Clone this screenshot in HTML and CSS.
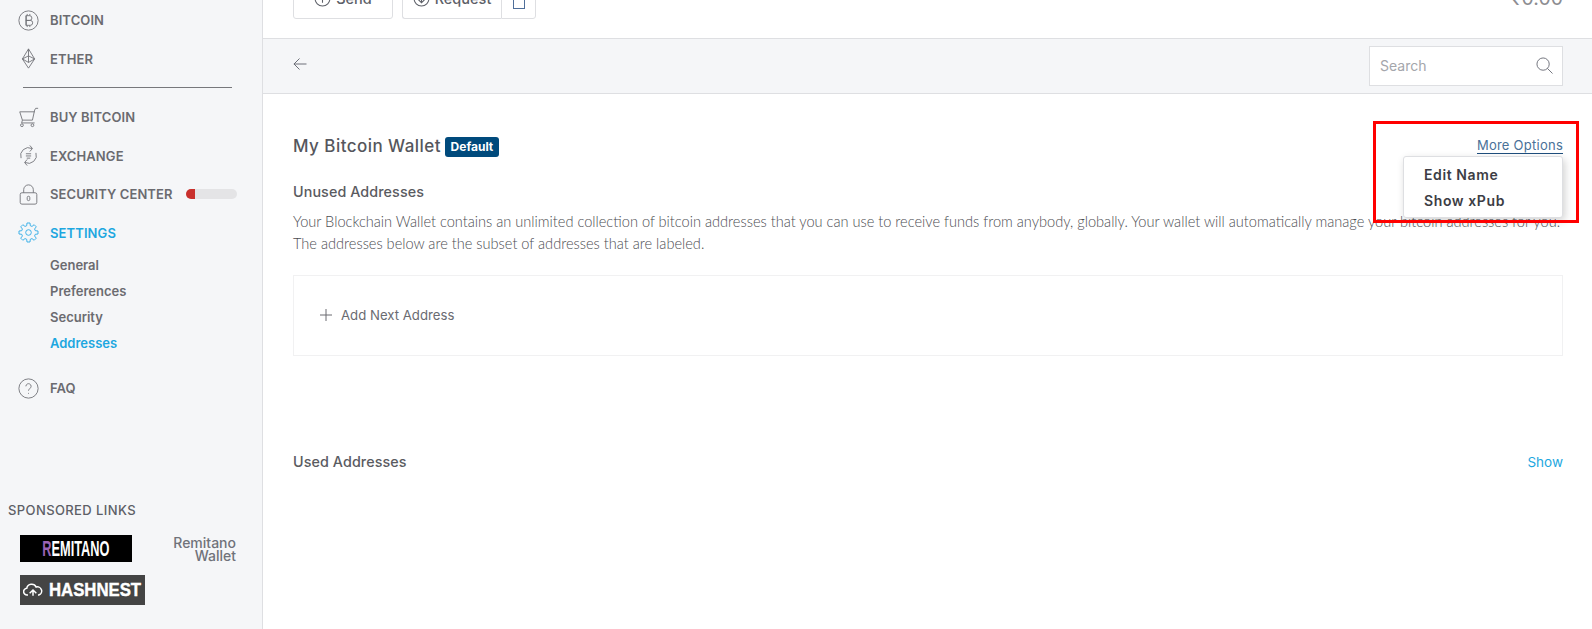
FILE: index.html
```html
<!DOCTYPE html>
<html lang="en">
<head>
<meta charset="utf-8">
<title>Addresses</title>
<link rel="stylesheet" href="styles.css">
</head>
<body>
<div class="app">
  <aside class="sidebar">
    <nav class="nav">
      <a class="nav-row">
        <svg class="ico" viewBox="0 0 24 24"><circle cx="12" cy="12" r="11"/><path d="M9 6.500h4.200a2.700 2.700 0 0 1 0 5.400H9h5a2.800 2.800 0 0 1 0 5.600H9ZM9.500 6.500v11M10.500 4.500v2M13.500 4.500v2M10.500 17.500v2M13.500 17.500v2"/></svg>
        <span>BITCOIN</span>
      </a>
      <a class="nav-row">
        <svg class="ico" viewBox="0 0 24 24"><path d="M12 1 5 12.500 12 23l7-10.500ZM12 1v15.500M5 12.500l7 4 7-4M12 9l-7 3.500M12 9l7 3.500"/></svg>
        <span>ETHER</span>
      </a>
      <div class="divider"></div>
      <a class="nav-row">
        <svg class="ico" viewBox="0 0 24 24"><path d="M23 1.500h-2.800l-1.200 2L16.500 15H5L2 5.500h17M5 15l-.8 3.200h14.800"/><circle cx="4.500" cy="20.800" r="1.600"/><circle cx="16.500" cy="20.800" r="1.600"/></svg>
        <span>BUY BITCOIN</span>
      </a>
      <a class="nav-row">
        <svg class="ico" viewBox="0 0 24 24"><path d="M3.500 15a9 9 0 0 1 12.500-11M20.500 9a9 9 0 0 1-12.500 11M13.500 .5l3 3.500-3 3.500M10.500 16.500l-3 3.500 3 3.500M9 10h6M9 12.500h6M10 15h4"/></svg>
        <span>EXCHANGE</span>
      </a>
      <a class="nav-row">
        <svg class="ico" viewBox="0 0 24 24"><rect x="2.500" y="10" width="19" height="13" rx="2"/><path d="M6.500 10V6.500a5.500 5.500 0 0 1 11 0V10"/><rect x="10.500" y="14" width="3" height="5" rx="1.500"/></svg>
        <span>SECURITY CENTER</span>
        <span class="meter"><span class="meter-fill"></span></span>
      </a>
      <a class="nav-row is-active">
        <svg class="ico" viewBox="0 0 24 24"><circle cx="12" cy="12" r="3.200"/><path d="M9.930 4.270 10.280 1.140H13.720L14.070 4.270 16 5.070 18.470 3.100 20.900 5.530 18.930 8 19.730 9.930 22.860 10.280V13.720L19.730 14.070 18.930 16 20.900 18.470 18.470 20.900 16 18.930 14.070 19.730 13.720 22.860H10.280L9.930 19.730 8 18.930 5.530 20.900 3.100 18.470 5.070 16 4.270 14.070 1.140 13.720V10.280L4.270 9.930 5.070 8 3.100 5.530 5.530 3.100 8 5.070Z"/></svg>
        <span>SETTINGS</span>
      </a>
      <div class="subnav">
        <a class="sub-row">General</a>
        <a class="sub-row">Preferences</a>
        <a class="sub-row">Security</a>
        <a class="sub-row is-active">Addresses</a>
      </div>
      <a class="nav-row faq">
        <svg class="ico" viewBox="0 0 24 24"><circle cx="12" cy="12" r="11"/><path d="M9 9.500a3 3 0 1 1 4.500 2.600c-1 .6-1.500 1.200-1.500 2.400M12 17v1"/></svg>
        <span>FAQ</span>
      </a>
    </nav>
    <div class="sponsored">
      <div class="sponsored-title">SPONSORED LINKS</div>
      <div class="sponsor-row">
        <a class="logo logo-remitano"><span class="logo-text-narrow"><b class="logo-r">R</b>EMITANO</span></a>
        <span class="sponsor-name">Remitano Wallet</span>
      </div>
      <a class="logo logo-hashnest">
        <svg class="cloud" viewBox="0 0 24 16"><path d="M6 14H5a4 4 0 0 1-.5-8 6 6 0 0 1 11.300-1.500A5 5 0 0 1 19 14h-1M8 12l4-4 4 4M12 8v7"/></svg>
        <span class="logo-text-wide">HASHNEST</span>
      </a>
    </div>
  </aside>

  <main class="main">
    <div class="topbar">
      <div class="actions">
        <button class="btn btn-send">
          <svg class="btn-ico" viewBox="0 0 16 16"><circle cx="8" cy="8" r="7"/><path d="M8 12V4M5 7l3-3 3 3"/></svg>
          <span>Send</span>
        </button>
        <div class="btn-group">
          <button class="btn btn-request">
            <svg class="btn-ico" viewBox="0 0 16 16"><circle cx="8" cy="8" r="7"/><path d="M8 4v8M5 9l3 3 3-3"/></svg>
            <span>Request</span>
          </button>
          <button class="btn btn-square"><span class="square"></span></button>
        </div>
      </div>
      <div class="balance">₹0.00</div>
    </div>

    <div class="band">
      <svg class="back" viewBox="0 0 14 14"><path d="M13.500 7H.8M6.500 1.500 1 7l5.500 5.500"/></svg>
      <div class="search">
        <span>Search</span>
        <svg class="search-ico" viewBox="0 0 18 18"><circle cx="7.500" cy="7.500" r="6.500"/><path d="m12 12 5.500 5.500"/></svg>
      </div>
    </div>

    <section class="content">
      <div class="title-row">
        <h1 class="title">My Bitcoin Wallet</h1>
        <span class="badge">Default</span>
        <a class="more">More Options</a>
      </div>
      <h2 class="sub-title">Unused Addresses</h2>
      <p class="copy">Your Blockchain Wallet contains an unlimited collection of bitcoin addresses that you can use to receive funds from anybody, globally. Your wallet will automatically manage your bitcoin addresses for you.<br>The addresses below are the subset of addresses that are labeled.</p>
      <div class="add-box">
        <svg class="plus" viewBox="0 0 12 12"><path d="M6 0v12M0 6h12"/></svg>
        <span>Add Next Address</span>
      </div>
      <div class="used-row">
        <h2 class="sub-title used-title">Used Addresses</h2>
        <a class="show">Show</a>
      </div>
    </section>

    <div class="menu">
      <a class="menu-item">Edit Name</a>
      <a class="menu-item">Show xPub</a>
    </div>
    <div class="highlight"></div>
  </main>
</div>
</body>
</html>
```

FILE: styles.css
```css
* { box-sizing: border-box; }
html, body { margin: 0; height: 629px; overflow: hidden; background: #fff; }
body { font-family: Inter, "Noto Sans", sans-serif; color: #5a5a5a; }
h1, h2, p { margin: 0; }
button { font: inherit; color: inherit; background: #fff; }

.app { display: flex; height: 629px; }

/* Sidebar */
.sidebar {
  width: 263px; flex: none; display: flex; flex-direction: column;
  background: #f5f6f8; border-right: 1px solid #dedfe2;
  padding-top: 1px;
}
.nav { display: flex; flex-direction: column; }
.nav-row {
  display: flex; align-items: center; height: 38.500px; padding-left: 18px;
  font-size: 13px; font-weight: 600; color: #6b6b70; letter-spacing: .1px;
}
.ico {
  width: 21px; height: 21px; flex: none; margin-right: 11px;
  fill: none; stroke: #6f7076; stroke-width: 1;
}
.is-active { color: #1da7e0; }
.is-active .ico { stroke: #2aa9e6; }
.divider { height: 1px; margin: 9px 30px 10px 23px; background: #77787c; }
.meter {
  width: 51px; height: 10px; margin-left: 13px; border-radius: 5px;
  background: #e4e4e6; overflow: hidden; display: block;
}
.meter-fill { display: block; width: 9px; height: 10px; background: #c9302c; }
.subnav { display: flex; flex-direction: column; }
.sub-row {
  display: flex; align-items: center; height: 26px; padding-left: 50px;
  font-size: 13px; font-weight: 600; color: #6b6b70;
}
.sub-row.is-active { color: #1da7e0; }
.faq { margin-top: 13px; }

.sponsored { margin-top: auto; padding: 0 0 24px 8px; }
.sponsored-title { font-size: 13px; font-weight: 500; letter-spacing: .4px; color: #5d5f66; line-height: 16px; margin-bottom: 17px; }
.sponsor-row { display: flex; align-items: flex-start; margin-left: 12px; height: 40px; }
.sponsor-name {
  width: 90px; margin-left: 14px; text-align: right; font-size: 14px; font-weight: 500;
  line-height: 13px; color: #70727a; padding-top: 1px;
}
.logo { display: flex; align-items: center; justify-content: center; color: #fff; overflow: hidden; }
.logo-remitano {
  width: 112px; height: 27px; background: #000;
  font-family: "Liberation Sans", sans-serif;
  font-weight: 700; font-size: 22px;
}
.logo-text-narrow { display: block; flex: none; transform: scaleX(.58); }
.logo-r { color: #9b63b5; }
.logo-hashnest {
  width: 125px; height: 30px; margin-left: 12px; background: #444; justify-content: flex-start; padding-left: 3px;
  font-family: "Liberation Sans", sans-serif; font-weight: 700; font-size: 18px; gap: 2px;
}
.logo-text-wide { display: block; flex: none; width: 100px; text-align: center; transform: scaleX(.93); -webkit-text-stroke: .4px #fff; }
.cloud { width: 20px; height: 14px; flex: none; fill: none; stroke: #fff; stroke-width: 1.800; }

/* Main */
.main { flex: 1; min-width: 0; position: relative; display: flex; flex-direction: column; }
.topbar { height: 38px; flex: none; padding: 0 29px 0 30px; display: flex; justify-content: space-between; overflow: hidden; }
.actions { display: flex; gap: 9px; margin-top: -22px; height: 41px; }
.btn {
  display: flex; align-items: center; justify-content: center; gap: 5px;
  height: 41px; border: 1px solid #dedfe2; border-radius: 3px;
  font-size: 14.500px; font-weight: 500; color: #5d6068; padding: 0;
}
.btn-send { width: 100px; }
.btn-group { display: flex; }
.btn-request { width: 99px; border-radius: 3px 0 0 3px; border-right: 0; }
.btn-square { width: 35px; border-radius: 0 3px 3px 0; }
.square { width: 12px; height: 20px; border: 1px solid #4f6f9a; display: block; }
.btn-ico { width: 17px; height: 17px; fill: none; stroke: #5d6068; stroke-width: 1; }
.balance { margin-top: -10px; font-size: 19.500px; line-height: 16px; color: #8d8d92; }

.band {
  height: 56px; flex: none; display: flex; align-items: center; justify-content: space-between;
  padding: 0 29px 0 30px; background: #f5f6f8; border-top: 1px solid #dedfe2; border-bottom: 1px solid #dedfe2;
}
.back { width: 14px; height: 14px; margin-bottom: 4px; fill: none; stroke: #6c6f78; stroke-width: 1; }
.search {
  width: 194px; height: 40px; display: flex; align-items: center; justify-content: space-between;
  padding: 0 9px 2px 10px; background: #fff; border: 1px solid #dedfe2;
  font-size: 14px; color: #a4a6ab;
}
.search-ico { width: 17px; height: 17px; fill: none; stroke: #6c6f78; stroke-width: 1; }

.content { padding: 0 29px 0 30px; }
.title-row { display: flex; align-items: center; height: 20px; margin-top: 42px; }
.title { font-size: 17px; font-weight: 500; color: #55565c; letter-spacing: .45px; }
.badge {
  display: block; width: 54px; height: 20px; margin-left: 4px; border-radius: 3px; position: relative; top: 1px;
  background: #004a7c; color: #fff; font-size: 12px; font-weight: 700; line-height: 20px; text-align: center;
}
.more {
  margin-left: auto; font-size: 13px; font-weight: 400; color: #4a7198; letter-spacing: .25px;
  border-bottom: 1px solid #1f4f7e; line-height: 15px;
}
.sub-title { font-size: 14.300px; font-weight: 500; color: #5a5b61; line-height: 20px; letter-spacing: .1px; }
.title-row + .sub-title { margin-top: 26px; }
.copy {
  margin-top: 9px; font-family: Lato, sans-serif; font-weight: 300; font-size: 14.600px;
  line-height: 22px; color: #4c4d52; white-space: nowrap;
}
.add-box {
  display: flex; align-items: center; height: 81px; margin-top: 20px; padding: 0 0 1px 26px;
  border: 1px solid #f1f1f2; font-size: 13.200px; font-weight: 400; color: #6a6b71;
}
.plus { width: 12px; height: 12px; margin-right: 9px; fill: none; stroke: #6a6b71; stroke-width: 1; }
.used-row { display: flex; align-items: center; justify-content: space-between; margin-top: 96px; }
.show { font-size: 13.500px; color: #1da7e0; }

/* Overlays */
.menu {
  position: absolute; left: 1140px; top: 156px; width: 160px; height: 62px;
  padding: 5px 0 0 20px; background: #fff; border: 1px solid #dedfe2; border-radius: 3px;
  box-shadow: 2px 3px 8px rgba(0,0,0,.18);
}
.menu-item { display: block; height: 26px; line-height: 26px; font-size: 14px; font-weight: 600; color: #3c3d44; letter-spacing: .6px; }
.highlight {
  position: absolute; left: 1110px; top: 121px; width: 206px; height: 102px;
  border: 3px solid #f00;
}
```
